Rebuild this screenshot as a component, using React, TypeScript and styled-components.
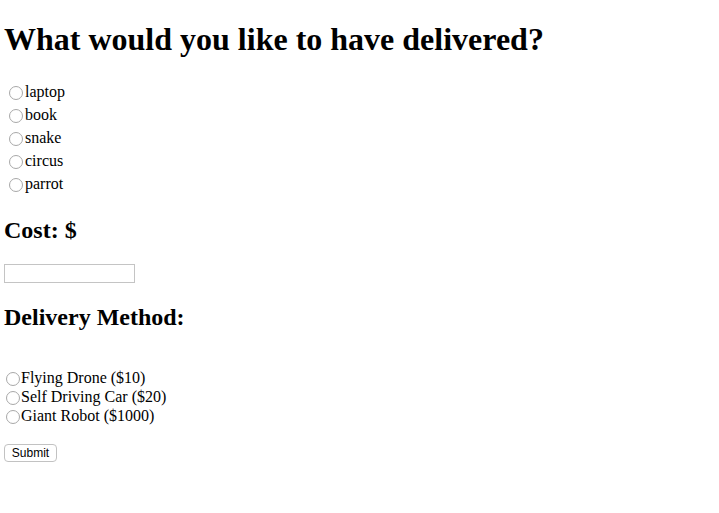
import styled, { createGlobalStyle } from "styled-components";

const GlobalStyle = createGlobalStyle`
  body {
    margin: 0;
    background: #ffffff;
    color: #000000;
    font-family: "Liberation Serif", "Times New Roman", serif;
    font-size: 16px;
  }
`;

const Page = styled.form`
  padding: 0 4px;
`;

const Title = styled.h1`
  font-size: 32px;
  font-weight: bold;
  line-height: 37px;
  margin: 21px 0 22px;
`;

const SubTitle = styled.h2`
  font-size: 24px;
  font-weight: bold;
  line-height: 28px;
  margin: 20px 0;
`;

const ItemList = styled.div<{ extra?: number }>`
  display: flex;
  flex-direction: column;
  padding-bottom: ${(props) => props.extra ?? 0}px;
`;

const Option = styled.label<{ compact?: boolean }>`
  display: flex;
  align-items: center;
  height: ${(props) => (props.compact ? "19px" : "23px")};
  line-height: 18px;
`;

const Radio = styled.input.attrs({ type: "radio" })<{ compact?: boolean }>`
  appearance: none;
  -webkit-appearance: none;
  box-sizing: border-box;
  width: 14px;
  height: 14px;
  margin: 2px ${(props) => (props.compact ? "1px 0 2px" : "2px 0 5px")};
  border: 1px solid #a8a8a8;
  border-radius: 50%;
  background: #ffffff;
  flex-shrink: 0;

  &:checked {
    border: 4px solid #1a73e8;
  }
`;

const CostInput = styled.input`
  display: block;
  box-sizing: border-box;
  width: 131px;
  height: 19px;
  margin: 0;
  padding: 1px 2px;
  border: 1px solid #c4c4c4;
  font-size: 13px;
  font-family: "Liberation Sans", Arial, sans-serif;
`;

const Spacer = styled.div`
  height: 17px;
`;

const SubmitButton = styled.button`
  display: block;
  box-sizing: border-box;
  margin-top: 19px;
  width: 53px;
  height: 18px;
  padding: 0;
  background: #ffffff;
  border: 1px solid #c2c2c2;
  border-radius: 4px;
  color: #000000;
  font-family: "Liberation Sans", Arial, sans-serif;
  font-size: 12px;
  line-height: 16px;
`;

const items = ["laptop", "book", "snake", "circus", "parrot"];

const methods = [
  "Flying Drone ($10)",
  "Self Driving Car ($20)",
  "Giant Robot ($1000)",
];

const App = () => {
  return (
    <>
      <GlobalStyle />
      <Page onSubmit={(e) => e.preventDefault()}>
        <Title>What would you like to have delivered?</Title>
        <ItemList extra={1}>
          {items.map((item) => (
            <Option key={item}>
              <Radio name="item" value={item} />
              {item}
            </Option>
          ))}
        </ItemList>
        <SubTitle>Cost: $</SubTitle>
        <CostInput type="text" />
        <SubTitle>Delivery Method:</SubTitle>
        <Spacer />
        <ItemList>
          {methods.map((method) => (
            <Option compact key={method}>
              <Radio compact name="method" value={method} />
              {method}
            </Option>
          ))}
        </ItemList>
        <SubmitButton type="submit">Submit</SubmitButton>
      </Page>
    </>
  );
};

export default App;
